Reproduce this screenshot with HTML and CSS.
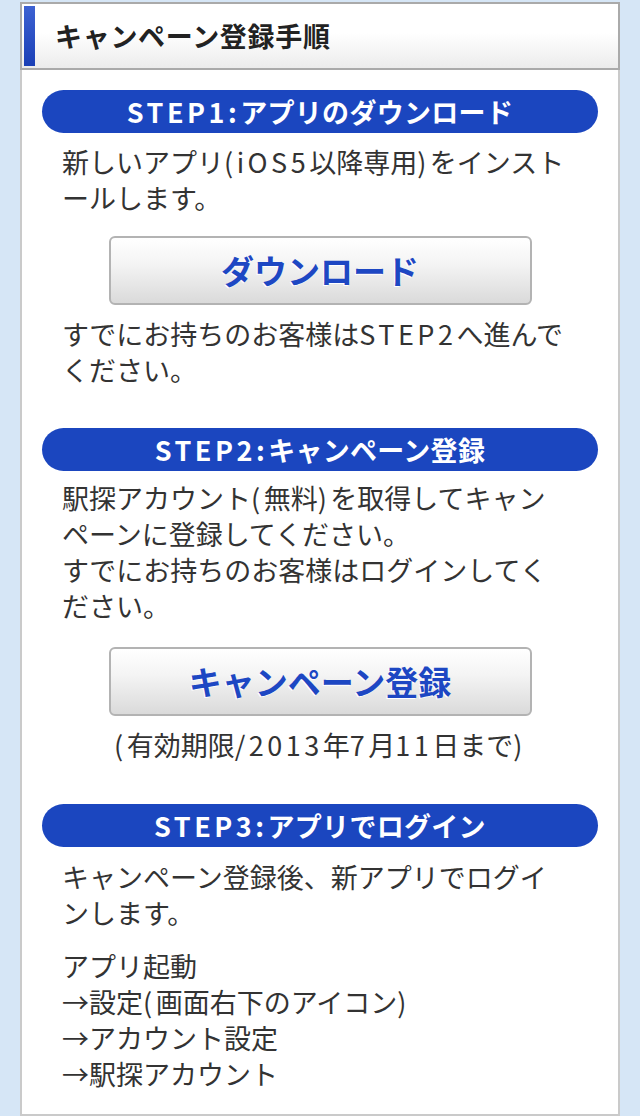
FILE: index.html
```html
<!DOCTYPE html>
<html lang="ja">
<head>
<meta charset="utf-8">
<title>キャンペーン登録手順</title>
<link rel="stylesheet" href="styles.css">
</head>
<body>
<div class="panel">
  <div class="panel-header">
    <span class="bar"></span>
    <h1 class="title">キャンペーン登録手順</h1>
  </div>
  <div class="panel-body">
    <h2 class="step"><span class="lat">STEP1:</span>アプリのダウンロード</h2>
    <p class="text t1">新しいアプリ<span class="lat">(iOS5</span>以降専用<span class="lat">)</span>をインスト<br>ールします。</p>
    <a class="button b1" href="#">ダウンロード</a>
    <p class="text t2">すでにお持ちのお客様は<span class="lat">STEP2</span>へ進んで<br>ください。</p>

    <h2 class="step s2"><span class="lat">STEP2:</span>キャンペーン登録</h2>
    <p class="text t3">駅探アカウント<span class="lat">(</span>無料<span class="lat">)</span>を取得してキャン<br>ペーンに登録してください。<br>すでにお持ちのお客様はログインしてく<br>ださい。</p>
    <a class="button b2" href="#">キャンペーン登録</a>
    <p class="text note"><span class="lat">(</span>有効期限<span class="lat">/2013</span>年<span class="lat">7</span>月<span class="lat">11</span>日まで<span class="lat">)</span></p>

    <h2 class="step s3"><span class="lat">STEP3:</span>アプリでログイン</h2>
    <p class="text t4">キャンペーン登録後、新アプリでログイ<br>ンします。</p>
    <p class="text t5">アプリ起動<br>→設定<span class="lat">(</span>画面右下のアイコン<span class="lat">)</span><br>→アカウント設定<br>→駅探アカウント</p>
  </div>
</div>
</body>
</html>
```
FILE: styles.css
```css
html, body {
  margin: 0;
  padding: 0;
}
body {
  background: #d6e6f6;
  font-family: "Noto Sans CJK JP", "Noto Sans", sans-serif;
  color: #333;
  height: 1116px;
  overflow: hidden;
}
.lat {
  letter-spacing: 3.5px;
}
.panel {
  margin: 2px 20px 0;
  width: 600px;
}
.panel-header {
  display: flex;
  border: 2px solid #aaaaaa;
  padding: 2px;
  background: linear-gradient(#ffffff 0%, #ffffff 45%, #ececec 100%);
  height: 60px;
}
.bar {
  width: 11px;
  flex: none;
  background: linear-gradient(#3d62d2, #1a3fb6);
}
.title {
  margin: 0;
  padding-left: 20px;
  font-size: 27px;
  font-weight: 700;
  line-height: 60px;
  color: #222;
  letter-spacing: 0.7px;
}
.panel-body {
  background: #fff;
  border: 2px solid #cacaca;
  border-top: none;
  padding: 20px 0 22px;
  display: flex;
  flex-direction: column;
}
.step {
  margin: 0 20px;
  height: 43px;
  border-radius: 22px;
  background: #1b46bf;
  color: #fff;
  font-size: 27px;
  font-weight: 700;
  line-height: 43px;
  text-align: center;
  letter-spacing: 0.3px;
}
.s2 { margin-top: 40px; }
.s3 { margin-top: 41px; }
.text {
  margin: 0;
  padding: 0 40px;
  font-size: 27px;
  line-height: 36px;
  white-space: nowrap;
}
.t1 { margin-top: 11px; }
.t2 { margin-top: 11px; }
.t3 { margin-top: 9px; }
.t4 { margin-top: 12px; }
.t5 { margin-top: 17px; }
.note {
  margin-top: 11px;
  text-align: center;
}
.button {
  align-self: center;
  box-sizing: border-box;
  width: 423px;
  height: 69px;
  border: 2px solid #b3b3b3;
  border-radius: 6px;
  background: linear-gradient(#ffffff 0%, #f4f4f4 40%, #dadada 100%);
  color: #1d47c3;
  font-size: 33px;
  font-weight: 700;
  line-height: 65px;
  text-align: center;
  text-decoration: none;
  text-shadow: -1px 1px 0 #fff;
}
.b1 { margin-top: 20px; }
.b2 { margin-top: 23px; }
```
